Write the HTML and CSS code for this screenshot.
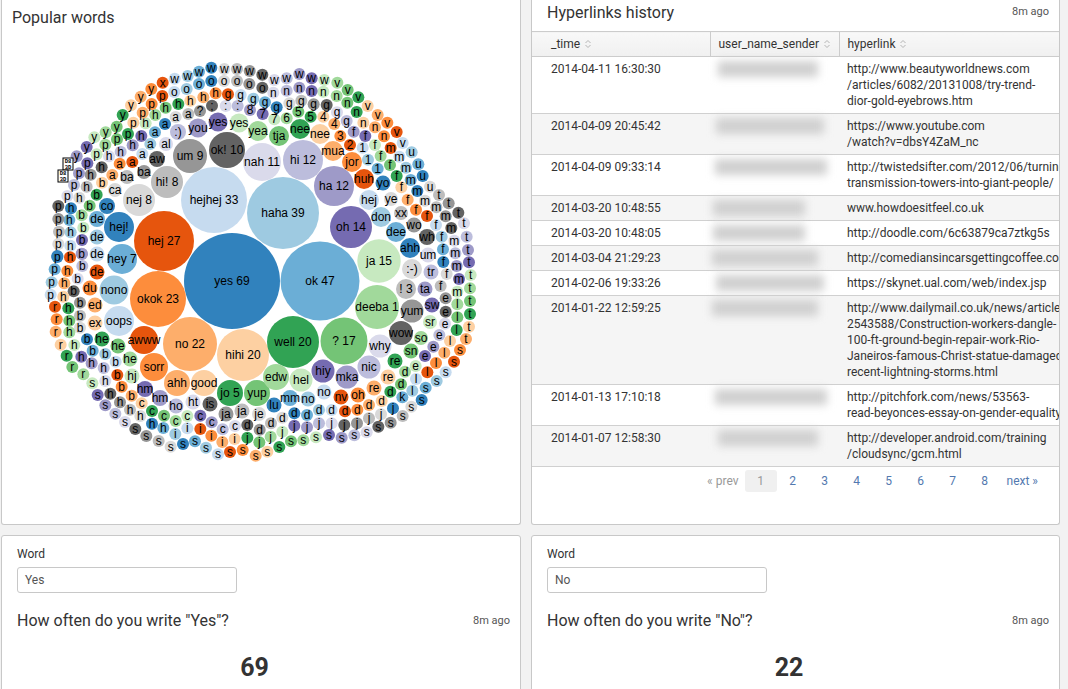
FILE: index.html
```html
<!DOCTYPE html>
<html lang="en">

<head>
    <meta charset="UTF-8">
    <title>Chat dashboard</title>

    <link rel="stylesheet" href="styles.css">
</head>

<body>
    <div class="dashboard">
        <section class="panel panel-top">
            <div class="panel-head panel-head-words">
                <h2>Popular words</h2>
            </div>
            <svg id="bubbles" class="bubbles" viewBox="2 35 518 470" width="518" height="470"></svg>
        </section>

        <section class="panel panel-top">
            <div class="panel-head panel-head-links">
                <h2>Hyperlinks history</h2>
                <span class="ago">8m ago</span>
            </div>
            <table class="links">
                <colgroup>
                    <col class="col-time">
                    <col class="col-user">
                    <col>
                </colgroup>
                <thead>
                    <tr>
                        <th class="cell-time">_time <svg class="sort" viewBox="0 0 8 10"><path d="M1.5 4L4 1.5L6.5 4M1.5 6L4 8.5L6.5 6" /></svg></th>
                        <th>user_name_sender <svg class="sort" viewBox="0 0 8 10"><path d="M1.5 4L4 1.5L6.5 4M1.5 6L4 8.5L6.5 6" /></svg></th>
                        <th>hyperlink <svg class="sort" viewBox="0 0 8 10"><path d="M1.5 4L4 1.5L6.5 4M1.5 6L4 8.5L6.5 6" /></svg></th>
                    </tr>
                </thead>
                <tbody>
                    <tr>
                        <td class="cell-time">2014-04-11 16:30:30</td>
                        <td><div class="blur blur-m"></div></td>
                        <td>http://www.beautyworldnews.com<br>/articles/6082/20131008/try-trend-<br>dior-gold-eyebrows.htm</td>
                    </tr>
                    <tr>
                        <td class="cell-time">2014-04-09 20:45:42</td>
                        <td><div class="blur blur-l"></div></td>
                        <td>https://www.youtube.com<br>/watch?v=dbsY4ZaM_nc</td>
                    </tr>
                    <tr>
                        <td class="cell-time">2014-04-09 09:33:14</td>
                        <td><div class="blur blur-xl"></div></td>
                        <td>http://twistedsifter.com/2012/06/turning-<br>transmission-towers-into-giant-people/</td>
                    </tr>
                    <tr>
                        <td class="cell-time">2014-03-20 10:48:55</td>
                        <td><div class="blur blur-s"></div></td>
                        <td>www.howdoesitfeel.co.uk</td>
                    </tr>
                    <tr>
                        <td class="cell-time">2014-03-20 10:48:05</td>
                        <td><div class="blur blur-s"></div></td>
                        <td>http://doodle.com/6c63879ca7ztkg5s</td>
                    </tr>
                    <tr>
                        <td class="cell-time">2014-03-04 21:29:23</td>
                        <td><div class="blur blur-n"></div></td>
                        <td>http://comediansincarsgettingcoffee.com/</td>
                    </tr>
                    <tr>
                        <td class="cell-time">2014-02-06 19:33:26</td>
                        <td><div class="blur blur-l"></div></td>
                        <td>https://skynet.ual.com/web/index.jsp</td>
                    </tr>
                    <tr>
                        <td class="cell-time">2014-01-22 12:59:25</td>
                        <td><div class="blur blur-n"></div></td>
                        <td>http://www.dailymail.co.uk/news/article-<br>2543588/Construction-workers-dangle-<br>100-ft-ground-begin-repair-work-Rio-<br>Janeiros-famous-Christ-statue-damaged-<br>recent-lightning-storms.html</td>
                    </tr>
                    <tr>
                        <td class="cell-time">2014-01-13 17:10:18</td>
                        <td><div class="blur blur-xl"></div></td>
                        <td>http://pitchfork.com/news/53563-<br>read-beyonces-essay-on-gender-equality</td>
                    </tr>
                    <tr>
                        <td class="cell-time">2014-01-07 12:58:30</td>
                        <td><div class="blur blur-m"></div></td>
                        <td>http://developer.android.com/training<br>/cloudsync/gcm.html</td>
                    </tr>
                </tbody>
            </table>
            <div class="pager">
                <span class="pager-prev">« prev</span>
                <span class="pager-item pager-current">1</span>
                <a class="pager-item">2</a>
                <a class="pager-item">3</a>
                <a class="pager-item">4</a>
                <a class="pager-item">5</a>
                <a class="pager-item">6</a>
                <a class="pager-item">7</a>
                <a class="pager-item">8</a>
                <a class="pager-next">next »</a>
            </div>
        </section>

        <section class="panel panel-bottom">
            <label class="field-label">Word</label>
            <div class="field">Yes</div>
            <div class="single-head">
                <h2>How often do you write "Yes"?</h2>
                <span class="ago">8m ago</span>
            </div>
            <div class="single-value">69</div>
        </section>

        <section class="panel panel-bottom">
            <label class="field-label">Word</label>
            <div class="field">No</div>
            <div class="single-head">
                <h2>How often do you write "No"?</h2>
                <span class="ago">8m ago</span>
            </div>
            <div class="single-value">22</div>
        </section>
    </div>

    <script src="chart.js"></script>
</body>

</html>
```

FILE: styles.css
```css
body,
html {
    width: 100%;
    height: 100%;
    margin: 0;
    padding: 0;
    overflow: hidden;
}

body {
    background-color: #f2f2f2;
    font-family: Roboto, "Liberation Sans", sans-serif;
    font-size: 12px;
    color: #333;
}

h2 {
    margin: 0;
    font-size: 16px;
    font-weight: 400;
    line-height: 20px;
    color: #333;
}

.dashboard {
    display: grid;
    grid-template-columns: 520px 529px;
    grid-template-rows: 525px 200px;
    column-gap: 10px;
    row-gap: 10px;
    padding-left: 1px;
}

.panel {
    background-color: #fff;
    border: 1px solid #c8c8c8;
    border-radius: 3px;
    overflow: hidden;
    position: relative;
}

.panel-top {
    border-top: 0;
    border-top-left-radius: 0;
    border-top-right-radius: 0;
}

.panel-head {
    display: flex;
    justify-content: space-between;
}

.panel-head-words {
    padding: 8px 10px 7px;
    height: 20px;
}

.panel-head-links {
    padding: 3px 10px 0 15px;
    height: 28px;
}

.ago {
    font-size: 11px;
    line-height: 18px;
    color: #555;
}

.bubbles {
    display: block;
}

.bubbles text {
    font-family: "Liberation Sans", Arial, sans-serif;
    font-size: 12px;
    text-anchor: middle;
    fill: #000;
}

.bubbles .tofu-box {
    fill: #fff;
    stroke: #000;
    stroke-width: 1;
}

.bubbles .tofu-text {
    font-family: "Liberation Mono", monospace;
    font-size: 5.5px;
    font-weight: 700;
}

.links {
    width: 527px;
    border-collapse: collapse;
    table-layout: fixed;
    white-space: nowrap;
}

.col-time {
    width: 178px;
}

.col-user {
    width: 129px;
}

.links th {
    height: 24px;
    padding: 0 0 0 8px;
    text-align: left;
    font-weight: 400;
    color: #333;
    background: linear-gradient(#f8f8f8, #f0f0f0);
    border-top: 1px solid #ccc;
    border-bottom: 1px solid #ccc;
    border-left: 1px solid #ccc;
}

.links th:first-child {
    border-left: 0;
}

.links td {
    padding: 4px 0 4px 8px;
    line-height: 16px;
    vertical-align: top;
    color: #333;
    border-bottom: 1px solid #d0d0d0;
    overflow: hidden;
}

.links tbody tr:nth-child(even) td {
    background-color: #f5f5f5;
}

.links .cell-time {
    padding-left: 19px;
}

.links td:nth-child(2) {
    overflow: visible;
}

.sort {
    width: 8px;
    height: 10px;
    margin-left: 1px;
    vertical-align: -1px;
    fill: none;
    stroke: #b5b5b5;
    stroke-width: 1;
}

.blur {
    height: 16px;
    background-color: #d0d0d0;
    filter: blur(4px);
}

.blur-s {
    width: 92px;
    margin-left: -5px;
}

.blur-m {
    width: 100px;
}

.blur-n {
    width: 106px;
    margin-left: -6px;
}

.blur-l {
    width: 108px;
    margin-left: -2px;
}

.blur-xl {
    width: 112px;
    margin-left: -3px;
}

.pager {
    display: flex;
    justify-content: flex-end;
    align-items: center;
    padding: 3px 21px 0 0;
    height: 22px;
    color: #5379af;
}

.pager-prev {
    margin-right: 6px;
    color: #999;
}

.pager-item {
    width: 32px;
    line-height: 22px;
    text-align: center;
}

.pager-current {
    background-color: #f0f0f0;
    color: #999;
    border-radius: 3px;
}

.pager-next {
    margin-left: 6px;
}

.panel-bottom {
    padding: 10px 10px 0 15px;
}

.field-label {
    display: block;
    line-height: 16px;
    color: #333;
}

.field {
    box-sizing: border-box;
    width: 220px;
    height: 26px;
    margin-top: 5px;
    padding-left: 7px;
    border: 1px solid #c8c8c8;
    border-radius: 3px;
    line-height: 24px;
    color: #555;
}

.single-head {
    display: flex;
    justify-content: space-between;
    align-items: center;
    margin-top: 18px;
}

.single-value {
    margin-top: 22px;
    padding-right: 18px;
    text-align: center;
    font-size: 25px;
    font-weight: 700;
    line-height: 30px;
    color: #333;
}
```

FILE: chart.js
```js
// category20c
const COLORS = [
    '#3182bd', '#6baed6', '#9ecae1', '#c6dbef', '#e6550d', '#fd8d3c', '#fdae6b', '#fdd0a2',
    '#31a354', '#74c476', '#a1d99b', '#c7e9c0', '#756bb1', '#9e9ac8', '#bcbddc', '#dadaeb',
    '#636363', '#969696', '#bdbdbd', '#d9d9d9'
];

// x, y, r, label, color
const WORDS = [
    [232, 281, 48, 'yes 69', 0], [320, 281, 39.5, 'ok 47', 1], [283, 213, 36, 'haha 39', 2],
    [214, 200, 33, 'hejhej 33', 3], [164, 241, 30, 'hej 27', 4], [158, 299, 28, 'okok 23', 5],
    [190, 344, 27, 'no 22', 6], [243, 355, 26, 'hihi 20', 7], [293, 342, 26, 'well 20', 8],
    [344, 341, 23.5, '? 17', 9], [377, 307, 22, 'deeba 1', 10], [379, 261, 21.7, 'ja 15', 11],
    [351, 227, 21, 'oh 14', 12], [334, 186, 20, 'ha 12', 13], [303, 160, 20, 'hi 12', 14],
    [262, 162, 19, 'nah 11', 15], [227, 150, 18, 'ok! 10', 16], [190, 156, 17, 'um 9', 17],
    [167, 182, 16, 'hi! 8', 18], [139, 200, 16, 'nej 8', 19], [119, 227, 15, 'hej!', 0],
    [122, 259, 15, 'hey 7', 1], [114, 290, 14.5, 'nono', 2], [119, 321, 15, 'oops', 3],
    [144, 340, 14, 'awww', 4], [154, 367, 14, 'sorr', 5], [177, 383, 13, 'ahh', 6],
    [204, 383, 13, 'good', 7], [230, 393, 13, 'jo 5', 8], [257, 393, 13, 'yup', 9],
    [276, 377, 13, 'edw', 10], [301, 380, 11.5, 'hel', 11], [323, 371, 11.5, 'hiy', 12],
    [347, 377, 11.5, 'mka', 13], [369, 367, 11.5, 'nic', 14], [380, 346, 11.5, 'why', 15],
    [401, 333, 12, 'wow', 16], [412, 311, 11.5, 'yum', 17], [406, 289, 10, '! 3', 18],
    [412, 269, 10, ':-)', 19], [410, 248, 10, 'ahh', 0], [396, 232, 10, 'dee', 1],
    [381, 217, 10, 'don', 2], [369, 200, 10, 'hej', 3], [364, 179, 10, 'huh', 4],
    [352, 162, 10, 'jor', 5], [333, 151, 10, 'mua', 6], [320, 134, 10, 'nee', 7],
    [300, 129, 10, 'nee', 8], [279, 136, 10, 'tja', 9], [258, 131, 10, 'yea', 10],
    [239, 123, 9.5, 'yes', 11], [218, 122, 9.5, 'yes', 12], [198, 128, 9.5, 'you', 13],
    [178, 132, 8, ':)', 14], [166, 144, 7, 'al', 15], [157, 159, 8, 'aw', 16],
    [144, 172, 7, 'ba', 17], [127, 177, 7, 'ba', 18], [115, 190, 7, 'ca', 19],
    [107, 206, 8, 'co', 0], [97, 219, 8, 'de', 1], [97, 237, 7.5, 'de', 2],
    [97, 254, 7.5, 'de', 3], [97, 272, 7.5, 'de', 4], [90, 288, 7.5, 'du', 5],
    [95, 305, 7.5, 'ed', 6], [95, 323, 7.5, 'ex', 7], [102, 339, 7.5, 'he', 8],
    [118, 346, 7.5, 'he', 9], [130, 359, 7.5, 'he', 10], [132, 376, 7.5, 'hj', 11],
    [145, 389, 8, 'hm', 12], [160, 398, 8, 'hm', 13], [176, 406, 7.5, 'ho', 14],
    [193, 402, 7.5, 'ht', 15], [210, 404, 7.5, 'is', 16], [226, 414, 7.5, 'ja', 17],
    [242, 411, 7.5, 'ja', 18], [259, 414, 7, 'je', 19], [274, 405, 7.5, 'lu', 0],
    [290, 398, 8, 'mm', 1], [308, 399, 7.5, 'no', 2], [324, 392, 7.5, 'no', 3],
    [341, 397, 7.5, 'nv', 4], [358, 395, 7.5, 'oh', 5], [374, 388, 7.5, 're', 6],
    [388, 377, 7.5, 're', 7], [395, 361, 7.5, 're', 8], [411, 351, 7.5, 'sn', 9],
    [421, 338, 7, 'so', 10], [430, 322, 7, 'sr', 11], [432, 305, 7.5, 'sw', 12],
    [425, 289, 7.5, 'ta', 13], [431, 272, 7.5, 'tr', 14], [428, 255, 7.5, 'um', 15],
    [427, 237, 8, 'wh', 16], [414, 225, 7.5, 'wo', 17], [401, 213, 7, 'xx', 18],
    [391, 199, 7, 'ye', 19], [383, 183, 7.5, 'yo', 0]
];

// single letter bubbles, read off a 3x grid: each quarter has its own origin
const QUARTERS = { a: [0, 0], b: [260, 50], c: [30, 250], d: [270, 280] };
const LETTERS = {
    a: [
        [788, 342, '7', 12], [750, 330, '8', 13], [713, 318, ':', 14], [677, 318, ':', 15], [636, 317, ';', 16],
        [600, 333, '?', 17], [565, 342, 'a', 18], [527, 351, 'a', 19], [495, 372, 'a', 0], [465, 397, 'a', 1],
        [451, 432, 'a', 2], [427, 462, 'a', 3], [397, 486, 'a', 4], [359, 491, 'a', 5], [337, 525, 'a', 6],
        [306, 548, 'b', 7], [290, 584, 'b', 8], [269, 617, 'b', 9], [245, 646, 'b', 10], [250, 683, 'b', 11],
        [246, 720, 'b', 12], [246, 762, 'b', 13],
        [795, 307, 'g', 1], [760, 296, 'g', 2], [722, 285, 'g', 3], [684, 283, 'g', 4], [647, 280, 'h', 5],
        [610, 292, 'h', 6], [571, 302, 'h', 7], [535, 312, 'h', 8], [497, 323, 'h', 9], [466, 345, 'h', 10],
        [437, 370, 'h', 11], [424, 408, 'h', 12], [398, 436, 'h', 13], [362, 455, 'h', 14], [327, 469, 'h', 15],
        [305, 502, 'h', 16], [272, 524, 'h', 17], [260, 560, 'h', 18], [238, 593, 'h', 19], [213, 625, 'h', 0],
        [208, 660, 'h', 1], [212, 697, 'h', 2], [211, 737, 'h', 3], [210, 772, 'h', 4],
        [787, 263, 'o', 16], [748, 252, 'o', 17], [711, 243, 'o', 18], [672, 243, 'o', 19], [634, 243, 'o', 0],
        [597, 252, 'o', 1], [560, 267, 'o', 2], [523, 276, 'o', 3], [487, 288, 'p', 4], [455, 312, 'p', 5],
        [428, 338, 'p', 6], [400, 368, 'p', 7], [384, 402, 'p', 8], [351, 418, 'p', 9], [316, 434, 'p', 10],
        [290, 463, 'p', 11], [262, 490, 'p', 12], [237, 520, 'p', 13], [222, 555, 'p', 14], [202, 588, 'p', 15],
        [175, 618, 'p', 16], [175, 657, 'p', 17], [177, 695, 'p', 18], [175, 732, 'p', 19], [172, 768, 'p', 0],
        [787, 224, 'w', 16], [749, 213, 'w', 17], [711, 207, 'w', 18], [673, 207, 'w', 19], [634, 203, 'w', 0],
        [597, 215, 'w', 1], [563, 228, 'w', 2], [524, 236, 'w', 3], [488, 248, 'x', 4], [454, 267, 'y', 5],
        [422, 290, 'y', 6], [393, 316, 'y', 7], [368, 345, 'y', 8], [350, 380, 'y', 9], [317, 397, 'y', 10],
        [283, 412, 'y', 11], [260, 441, 'y', 12], [230, 469, 'y', 13]
    ],
    b: [
        [353, 356, '1', 1], [324, 329, '1', 2], [308, 293, '1', 3], [270, 285, '2', 4], [241, 258, '3', 5],
        [223, 222, '4', 6], [190, 200, '4', 7], [152, 200, '5', 8], [115, 185, '5', 9], [80, 205, '6', 10],
        [43, 208, '7', 11],
        [542, 708, 'f', 18], [560, 672, 'f', 19], [550, 636, 'f', 0], [549, 598, 'f', 1], [545, 560, 'f', 2],
        [528, 525, 'f', 3], [501, 498, 'f', 4], [468, 479, 'f', 5], [443, 449, 'f', 6], [424, 412, 'f', 7],
        [410, 378, 'f', 8], [390, 345, 'f', 9], [362, 318, 'f', 10], [345, 285, 'f', 11], [316, 258, 'f', 12],
        [281, 245, 'f', 13], [260, 213, 'g', 14], [231, 187, 'g', 15], [200, 165, 'g', 16], [161, 163, 'g', 17],
        [124, 152, 'g', 18], [88, 160, 'g', 19], [50, 172, 'g', 0],
        [597, 687, 'm', 12], [590, 648, 'm', 13], [586, 610, 'm', 14], [583, 572, 'm', 15], [574, 534, 'm', 16],
        [557, 499, 'm', 17], [529, 472, 'm', 18], [495, 452, 'm', 19], [472, 423, 'm', 0], [452, 390, 'm', 1],
        [438, 353, 'm', 2], [418, 320, 'm', 3], [392, 294, 'm', 4], [372, 259, 'n', 5], [345, 232, 'n', 6],
        [310, 218, 'n', 7], [290, 186, 'n', 8], [262, 158, 'n', 9], [230, 138, 'n', 10], [190, 125, 'n', 11],
        [155, 123, 'n', 12], [118, 113, 'n', 13], [80, 122, 'n', 14], [40, 128, 'n', 15],
        [632, 675, 't', 11], [627, 637, 't', 12], [624, 600, 't', 13], [620, 560, 't', 14], [612, 520, 't', 15],
        [595, 488, 't', 16], [566, 460, 't', 17], [537, 435, 't', 18], [510, 410, 'u', 19], [488, 378, 'u', 0],
        [475, 343, 'u', 1], [455, 307, 'u', 2], [428, 279, 'v', 3], [410, 246, 'v', 4], [382, 218, 'v', 5],
        [353, 195, 'v', 6], [323, 168, 'v', 7], [295, 142, 'v', 8], [263, 120, 'v', 9], [232, 98, 'v', 10],
        [193, 90, 'w', 11], [155, 85, 'w', 12], [118, 72, 'w', 13], [80, 85, 'w', 14], [43, 90, 'w', 15]
    ],
    c: [
        [155, 11, 'b', 13], [157, 48, 'b', 14], [143, 86, 'b', 15], [131, 124, 'b', 16], [150, 158, 'b', 17],
        [150, 197, 'b', 18], [150, 233, 'b', 19], [171, 268, 'b', 0], [188, 302, 'b', 1], [226, 312, 'b', 2],
        [257, 335, 'b', 3], [262, 375, 'b', 4], [275, 410, 'b', 5], [305, 437, 'b', 6], [335, 460, 'c', 7],
        [366, 483, 'c', 8], [402, 497, 'c', 9], [437, 513, 'c', 10], [472, 498, 'c', 11], [511, 497, 'c', 12],
        [545, 517, 'c', 13], [578, 538, 'c', 14], [615, 528, 'c', 15], [652, 525, 'd', 16], [689, 539, 'd', 17],
        [723, 520, 'd', 18],
        [112, 63, 'h', 5], [103, 100, 'h', 6], [100, 140, 'h', 7], [115, 175, 'h', 8], [118, 212, 'h', 9],
        [118, 247, 'h', 10], [133, 285, 'h', 11], [154, 320, 'h', 12], [185, 340, 'h', 13], [221, 354, 'h', 14],
        [226, 393, 'h', 15], [241, 431, 'h', 16], [270, 457, 'h', 17], [300, 479, 'h', 18], [331, 498, 'h', 19],
        [366, 521, 'h', 0], [400, 534, 'h', 1], [436, 552, 'i', 2], [472, 535, 'i', 3], [511, 537, 'i', 4],
        [544, 557, 'i', 5], [577, 576, 'i', 6], [614, 567, 'i', 7], [652, 563, 'j', 8], [688, 577, 'j', 9],
        [722, 560, 'j', 10],
        [82, 21, 'p', 0], [74, 58, 'p', 1], [65, 97, 'p', 2], [62, 134, 'p', 3], [75, 170, 'r', 4],
        [80, 208, 'r', 5], [77, 245, 'r', 6], [92, 284, 'r', 7], [110, 317, 'r', 8], [127, 351, 'r', 9],
        [160, 373, 'r', 10], [187, 400, 's', 11], [203, 435, 's', 12], [226, 466, 's', 13], [256, 491, 's', 14],
        [285, 516, 's', 15], [316, 537, 's', 16], [349, 558, 's', 17], [386, 573, 's', 18], [422, 590, 's', 19],
        [459, 582, 's', 0], [495, 574, 's', 1], [528, 593, 's', 2], [564, 613, 's', 3], [600, 606, 's', 4],
        [638, 600, 's', 5], [677, 617, 's', 6], [712, 605, 's', 7]
    ],
    d: [
        [37, 413, 'd', 19], [73, 400, 'd', 0], [111, 405, 'd', 1], [147, 390, 'd', 2], [185, 390, 'd', 3],
        [225, 394, 'd', 4], [262, 389, 'd', 5], [297, 375, 'd', 6], [335, 363, 'd', 7], [361, 335, 'd', 8],
        [393, 313, 'd', 9], [405, 275, 'd', 10], [437, 258, 'e', 11], [465, 228, 'e', 12], [490, 200, 'e', 13],
        [508, 165, 'e', 14], [525, 131, 'e', 15], [527, 95, 'e', 16], [527, 55, 'e', 17],
        [37, 455, 'j', 11], [73, 437, 'j', 12], [111, 442, 'j', 13], [147, 430, 'j', 14], [185, 430, 'j', 15],
        [223, 435, 'j', 16], [261, 430, 'j', 17], [297, 415, 'j', 18], [333, 403, 'j', 19], [369, 385, 'j', 0],
        [397, 352, 'k', 1], [427, 332, 'l', 2], [438, 297, 'l', 3], [472, 277, 'l', 4], [498, 249, 'l', 5],
        [523, 218, 'l', 6], [540, 183, 'l', 7], [560, 150, 'l', 8], [562, 112, 'l', 9], [562, 73, 'l', 10],
        [562, 35, 'm', 11],
        [600, 25, 't', 10], [600, 63, 't', 9], [600, 102, 't', 8], [597, 140, 't', 7], [588, 177, 't', 6],
        [570, 210, 's', 5], [552, 245, 's', 4], [527, 277, 's', 3], [500, 303, 's', 2], [467, 323, 's', 1],
        [455, 360, 's', 0], [424, 380, 's', 19], [398, 408, 's', 18], [362, 428, 's', 17], [325, 440, 's', 16],
        [290, 457, 's', 15], [253, 466, 's', 14], [215, 473, 's', 13], [177, 465, 's', 12], [138, 472, 's', 11],
        [100, 481, 's', 10], [63, 484, 's', 9], [28, 501, 's', 8]
    ]
};

const NS = 'http://www.w3.org/2000/svg';
const svg = document.getElementById('bubbles');

const el = (name, attrs, text) => {
    const node = document.createElementNS(NS, name);
    Object.keys(attrs).forEach((key) => node.setAttribute(key, attrs[key]));
    if (text) {
        node.textContent = text;
    }
    svg.appendChild(node);
    return node;
};

const bubble = (x, y, r, label, color) => {
    el('circle', { cx: x, cy: y, r: r, fill: COLORS[color] });
    el('text', { x: x, y: y + 4 }, label);
};

WORDS.forEach((w) => bubble(w[0], w[1], w[2], w[3], w[4]));

Object.keys(LETTERS).forEach((key) => {
    const origin = QUARTERS[key];
    LETTERS[key].forEach((l) => {
        bubble(origin[0] + l[0] / 3, origin[1] + l[1] / 3, 6, l[2], l[3]);
    });
});

// emoji that the chart could not draw, shown as hex boxes
const tofu = (x, y) => {
    el('rect', { class: 'tofu-box', x: x - 5, y: y - 6, width: 10, height: 12 });
    el('text', { class: 'tofu-text', x: x, y: y - 1 }, 'D8');
    el('text', { class: 'tofu-text', x: x, y: y + 5 }, '3D');
};

tofu(68, 164);
tofu(63, 176);
```
